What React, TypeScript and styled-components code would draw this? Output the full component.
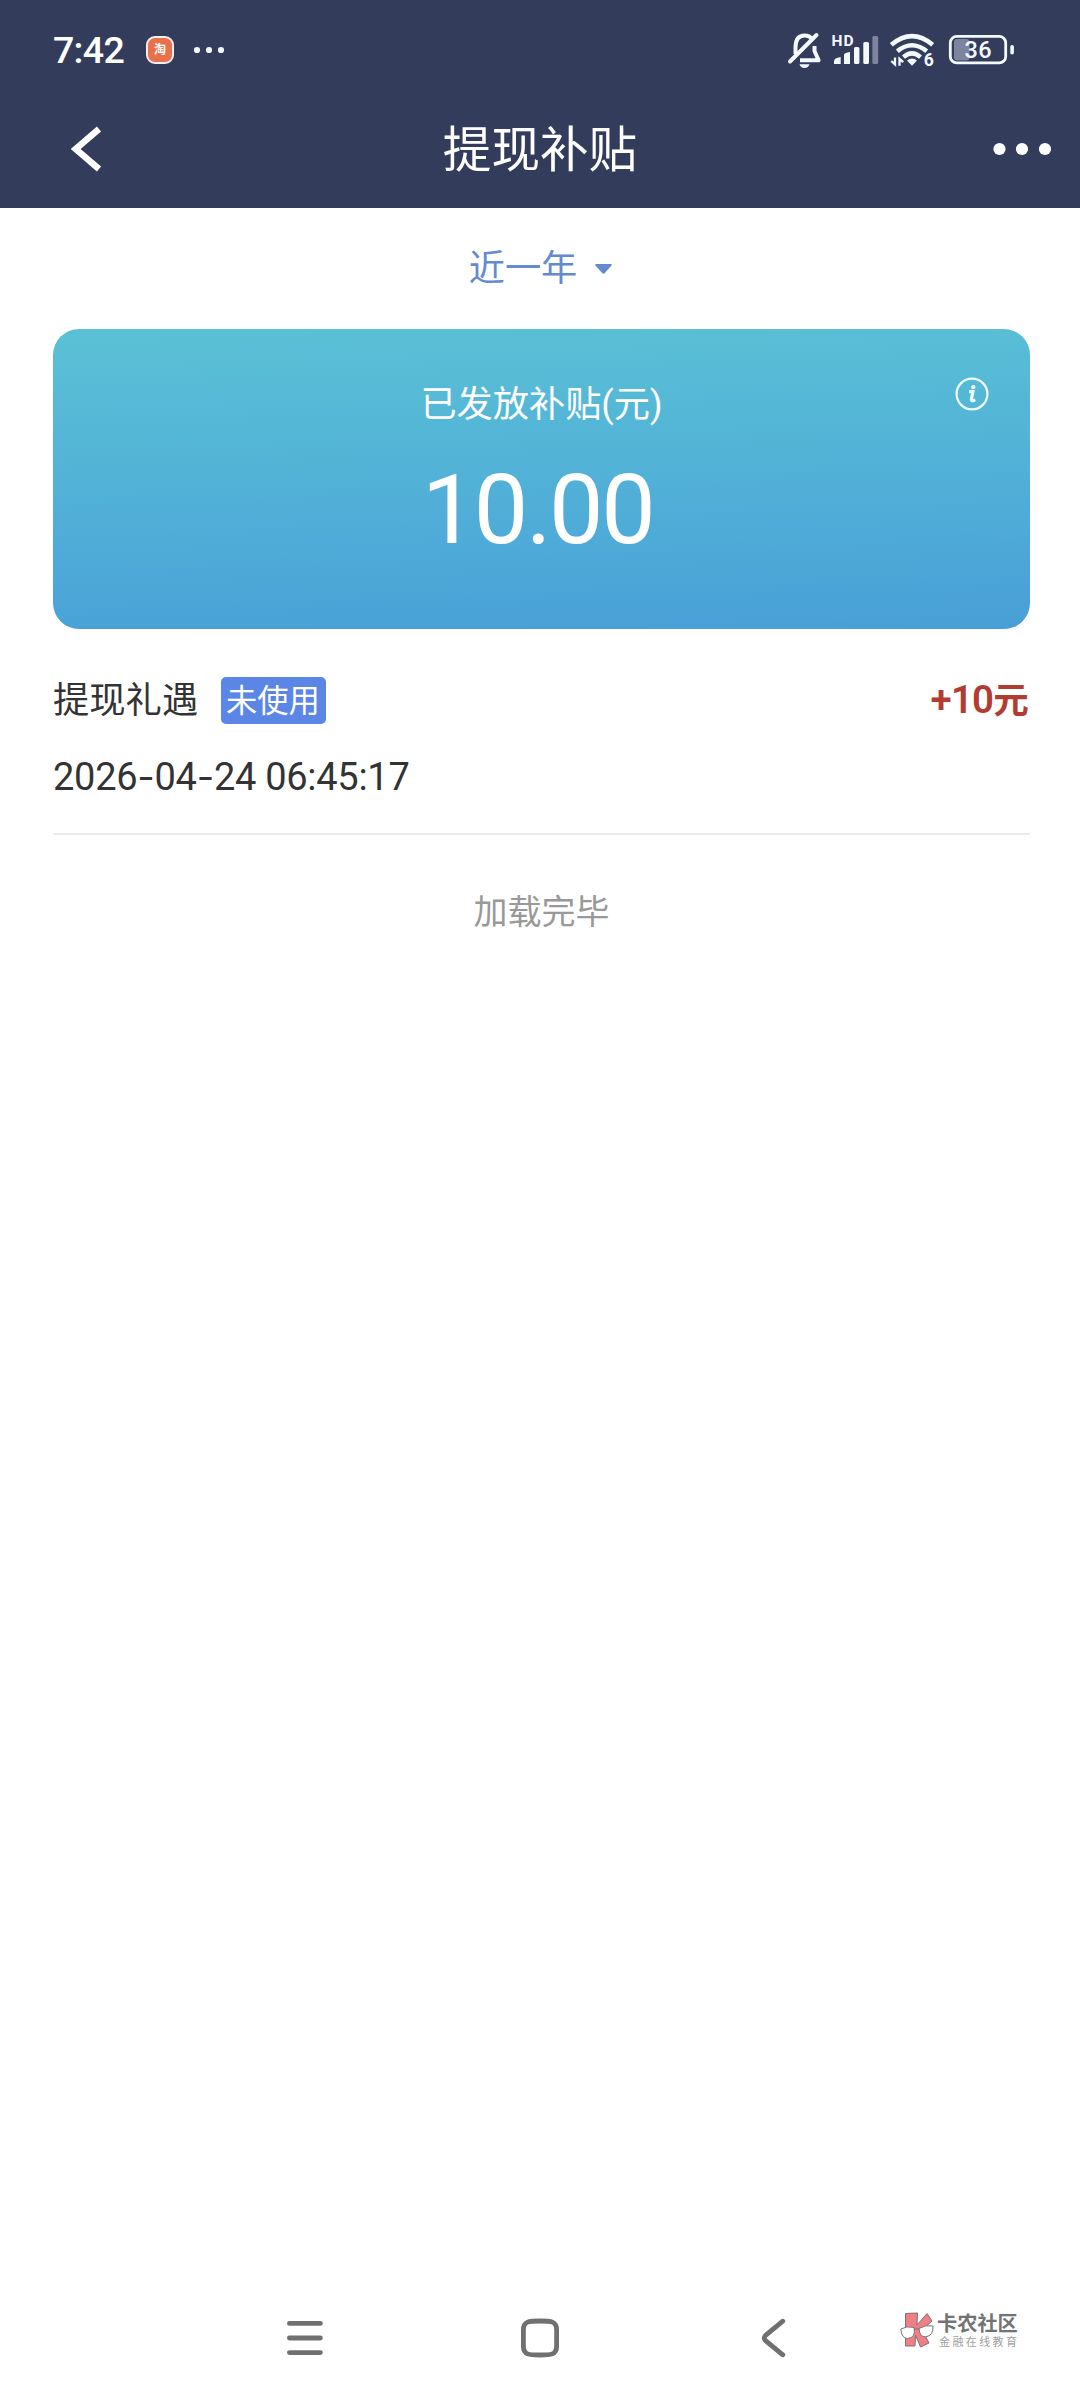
import React from "react";
import styled, { createGlobalStyle } from "styled-components";

const GlobalStyle = createGlobalStyle`
  * { box-sizing: border-box; }
  body { margin: 0; background: #fff; }
  svg { display: block; flex: none; }
`;

const Screen = styled.div`
  width: 1080px;
  height: 2400px;
  display: flex;
  flex-direction: column;
  background: #fff;
  color: #333;
  font-family: Roboto, "Noto Sans CJK SC", sans-serif;
  overflow: hidden;
`;

const Header = styled.header`
  height: 208px;
  flex: none;
  background: #343c5c;
  color: #fff;
`;

const StatusBar = styled.div`
  height: 100px;
  padding: 0 65px 0 53px;
  display: flex;
  justify-content: space-between;
`;

const StatusGroup = styled.div`
  display: flex;
  align-items: center;
  height: 100px;
`;

const Clock = styled.span`
  width: 93px;
  font-size: 37.5px;
  line-height: 44px;
  font-weight: 500;
  letter-spacing: -0.7px;
`;

const AppIcon = styled.span`
  width: 28px;
  height: 28px;
  margin-right: 19px;
  border: 2px solid #fbeeee;
  border-radius: 9px;
  background: #e8714c;
  display: flex;
  align-items: center;
  justify-content: center;
  font-size: 12px;
  line-height: 14px;
  font-weight: 700;
`;

const TitleBar = styled.div`
  height: 97px;
  padding: 0 28px 0 71px;
  display: grid;
  grid-template-columns: 1fr auto 1fr;
  align-items: center;
  justify-items: start;
`;

const Title = styled.h1`
  margin: 4px 0 0 -43px;
  font-size: 48.6px;
  line-height: 60px;
  font-weight: 400;
`;

const MoreSlot = styled.div`
  justify-self: end;
`;

const Content = styled.main`
  flex: 1;
  padding: 0 50px 0 53px;
`;

const Filter = styled.div`
  height: 121px;
  padding: 1px 2px 0 0;
  display: flex;
  align-items: center;
  justify-content: center;
  gap: 18px;
  color: #648bce;
  font-size: 36.2px;
  line-height: 44px;
`;

const Card = styled.section`
  position: relative;
  height: 300px;
  border-radius: 26px;
  padding-top: 53px;
  text-align: center;
  color: #fff;
  background: linear-gradient(178deg, #5ac1d5 0%, #52b1d7 50%, #489fd7 100%);
`;

const CardLabel = styled.div`
  font-size: 36.2px;
  line-height: 46px;
`;

const CardAmount = styled.div`
  margin-top: 22px;
  padding-right: 8px;
  font-size: 97px;
  line-height: 120px;
  letter-spacing: -2.4px;
`;

const InfoButton = styled.span`
  position: absolute;
  top: 48px;
  right: 41.5px;
`;

const Entry = styled.article`
  height: 206px;
  padding-top: 48px;
  border-bottom: 2px solid #ebebeb;
`;

const EntryRow = styled.div`
  height: 47px;
  display: flex;
  align-items: center;
`;

const EntryName = styled.span`
  width: 168px;
  font-size: 36.3px;
  line-height: 46px;
`;

const Badge = styled.span`
  width: 105px;
  height: 47px;
  padding-left: 5px;
  border-radius: 5px;
  background: #5b86e5;
  color: #fff;
  font-size: 31.3px;
  line-height: 49px;
`;

const EntryAmount = styled.span`
  margin-left: auto;
  padding-right: 2px;
  color: #b23c31;
  font-size: 38.5px;
  line-height: 46px;
  letter-spacing: -0.8px;
  font-weight: 600;
  display: flex;
  align-items: baseline;
`;

const Unit = styled.span`
  font-size: 35.5px;
  font-weight: 700;
`;

const EntryTime = styled.time`
  display: block;
  margin-top: 29px;
  font-size: 38px;
  line-height: 46px;
  letter-spacing: -0.28px;
`;

const Hyphen = styled.span`
  font-family: Inter, sans-serif;
`;

const EndNote = styled.p`
  margin: 54px 0 0;
  text-align: center;
  color: #999;
  font-size: 34px;
  line-height: 46px;
`;

const NavBar = styled.nav`
  height: 124px;
  flex: none;
  padding: 0 62px 0 286px;
  display: flex;
  align-items: center;
`;

const NavItem = styled.span<{ $gap: number }>`
  margin-right: ${(p) => p.$gap}px;
`;

const Brand = styled.div`
  display: flex;
  align-items: center;
  gap: 3px;
  margin-top: -16px;
  white-space: nowrap;
`;

const BrandText = styled.div`
  display: flex;
  flex-direction: column;
  padding-top: 1px;
`;

const BrandName = styled.span`
  color: #737373;
  font-size: 20.2px;
  line-height: 24px;
  font-weight: 700;
`;

const BrandTag = styled.span`
  color: #a0a0a0;
  padding-left: 2px;
  font-size: 11px;
  line-height: 13px;
  letter-spacing: 2.4px;
`;

function StatusDots() {
  return (
    <svg width="32" height="8" viewBox="0 0 32 8" fill="#f4f8ff">
      <circle cx="4" cy="4" r="3.1" />
      <circle cx="16" cy="4" r="3.1" />
      <circle cx="28" cy="4" r="3.1" />
    </svg>
  );
}

function StatusIcons() {
  return (
    <svg width="228" height="40" viewBox="787 30 228 40" fill="none" stroke="#f4f8ff">
      <path d="M795.5 54V47.5C795.5 38.5 799 35.5 804.5 35.5C808 35.5 810.5 36.8 812 39M814.5 46V51L818.6 60.3H800" strokeWidth="4" strokeLinejoin="round" />
      <path d="M816.5 35L790 61.5" strokeWidth="4" strokeLinecap="round" />
      <path d="M799.5 64.3H809.5Q808.5 68 804.5 68T799.5 64.3Z" fill="#f4f8ff" stroke="none" />
      <text x="831.5" y="46" fill="#f4f8ff" stroke="none" fontFamily="Roboto, sans-serif" fontWeight="700" fontSize="15.5" textLength="22">HD</text>
      <g fill="#f4f8ff" stroke="none">
        <path d="M834 64V61Q834 58 840.7 57V64Z" />
        <path d="M844 64V54.5Q844 53 850 52V64Z" />
        <rect x="854" y="47" width="5.4" height="17" rx="1.5" />
        <rect x="863.3" y="42" width="5.7" height="22" rx="1.5" />
        <rect x="872.4" y="36" width="5.8" height="28" rx="1.5" fill="#7c84a0" />
      </g>
      <path d="M891.3 44.8Q912 27.5 932.7 44.8" strokeWidth="4.6" />
      <path d="M897.3 51.2Q912 39.3 926.7 51.2" strokeWidth="4.6" />
      <path d="M903.5 57.2Q912 49.6 920.5 57.2" strokeWidth="4.4" />
      <path d="M907 60.5Q912 56.6 917 60.5L912 65.8Z" fill="#f4f8ff" stroke="none" />
      <path d="M895 57.5V64.4L891.3 61M899.5 65.8V58.8L903.2 62.2" strokeWidth="2.3" />
      <text x="923.7" y="65.5" fill="#f4f8ff" stroke="none" fontFamily="Roboto, sans-serif" fontWeight="700" fontSize="17.5">6</text>
      <rect x="954" y="39" width="15.5" height="21.5" rx="3" fill="#7c84a0" stroke="none" />
      <rect x="950.3" y="36.3" width="55.4" height="26.6" rx="6.5" strokeWidth="2.8" />
      <rect x="1010.3" y="45" width="3.6" height="9.6" rx="1.8" fill="#f4f8ff" stroke="none" />
      <text x="964.5" y="58.3" fill="#f4f8ff" stroke="none" fontFamily="Roboto, sans-serif" fontWeight="500" fontSize="23.5" textLength="27">36</text>
    </svg>
  );
}

function BackIcon() {
  return (
    <svg width="32" height="46" viewBox="0 0 32 46" fill="none" stroke="#fff" strokeWidth="6.4">
      <path d="M28 3L4.6 23L28 43" />
    </svg>
  );
}

function MoreIcon() {
  return (
    <svg width="60" height="14" viewBox="0 0 60 14" fill="#fff">
      <circle cx="7.5" cy="7" r="6.1" />
      <circle cx="30" cy="7" r="6.1" />
      <circle cx="53" cy="7" r="6.1" />
    </svg>
  );
}

function CaretIcon() {
  return (
    <svg width="17" height="10" viewBox="0 0 17 10" fill="#648bce">
      <path d="M1 0H16Q17.4 .4 16.3 1.8L9.8 9Q8.5 10.4 7.2 9L.7 1.8Q-.4 .4 1 0Z" />
    </svg>
  );
}

function InfoIcon() {
  return (
    <svg width="34" height="34" viewBox="0 0 34 34" fill="none" stroke="#effdff">
      <circle cx="17" cy="17" r="15.4" strokeWidth="2.2" />
      <circle cx="18.3" cy="10.2" r="2.1" fill="#effdff" stroke="none" />
      <path d="M14 14.6H18L16.4 21.8Q16 24.2 17.7 23.8L20.3 22.9" strokeWidth="3.1" />
    </svg>
  );
}

function MenuIcon() {
  return (
    <svg width="37" height="36" viewBox="0 0 37 36" stroke="#707070" strokeWidth="4.8" strokeLinecap="round">
      <path d="M3.4 3.4H34.4M3.4 18H34.4M3.4 32.6H34.4" />
    </svg>
  );
}

function HomeIcon() {
  return (
    <svg width="40" height="40" viewBox="0 0 40 40" fill="none" stroke="#707070" strokeWidth="4.8">
      <path d="M20 3C31 3 36.6 3 36.6 12V28C36.6 37 31 37 20 37S3.4 37 3.4 28V12C3.4 3 9 3 20 3Z" />
    </svg>
  );
}

function NavBackIcon() {
  return (
    <svg width="26" height="40" viewBox="0 0 26 40" fill="none" stroke="#707070" strokeWidth="4.8" strokeLinecap="round">
      <path d="M22.8 3.2L5.6 17.3Q3 20 5.6 22.7L22.8 36.8" />
    </svg>
  );
}

function BrandLogo() {
  return (
    <svg width="34" height="36" viewBox="0 0 34 36" stroke="#7d7474" strokeWidth="1">
      <path d="M5.5 1.5L17.5 1L17 13L27 1.5L32 9L22 18L29 31L20.5 35L15.5 23L15 34H5.5Z" fill="#ef7f85" />
      <path d="M.8 17Q7 13.5 14 15.5Q16 26 7.5 26.5Q1.5 26.5 .8 17Z" fill="#fff" />
      <path d="M19 16.5Q25 12.5 33 14Q33.5 24 25.5 24.8Q19.5 25 19 16.5Z" fill="#fff" />
      <path d="M14 17.5Q16.5 15.8 19 17.5" fill="none" />
    </svg>
  );
}

export default function App() {
  return (
    <>
      <GlobalStyle />
      <Screen>
        <Header>
          <StatusBar>
            <StatusGroup>
              <Clock>7:42</Clock>
              <AppIcon>淘</AppIcon>
              <StatusDots />
            </StatusGroup>
            <StatusGroup>
              <StatusIcons />
            </StatusGroup>
          </StatusBar>
          <TitleBar>
            <BackIcon />
            <Title>提现补贴</Title>
            <MoreSlot>
              <MoreIcon />
            </MoreSlot>
          </TitleBar>
        </Header>
        <Content>
          <Filter>
            近一年
            <CaretIcon />
          </Filter>
          <Card>
            <CardLabel>已发放补贴(元)</CardLabel>
            <CardAmount>10.00</CardAmount>
            <InfoButton>
              <InfoIcon />
            </InfoButton>
          </Card>
          <Entry>
            <EntryRow>
              <EntryName>提现礼遇</EntryName>
              <Badge>未使用</Badge>
              <EntryAmount>
                +10<Unit>元</Unit>
              </EntryAmount>
            </EntryRow>
            <EntryTime>
              2026<Hyphen>-</Hyphen>04<Hyphen>-</Hyphen>24 06:45:17
            </EntryTime>
          </Entry>
          <EndNote>加载完毕</EndNote>
        </Content>
        <NavBar>
          <NavItem $gap={197}>
            <MenuIcon />
          </NavItem>
          <NavItem $gap={200}>
            <HomeIcon />
          </NavItem>
          <NavItem $gap={114}>
            <NavBackIcon />
          </NavItem>
          <Brand>
            <BrandLogo />
            <BrandText>
              <BrandName>卡农社区</BrandName>
              <BrandTag>金融在线教育</BrandTag>
            </BrandText>
          </Brand>
        </NavBar>
      </Screen>
    </>
  );
}
